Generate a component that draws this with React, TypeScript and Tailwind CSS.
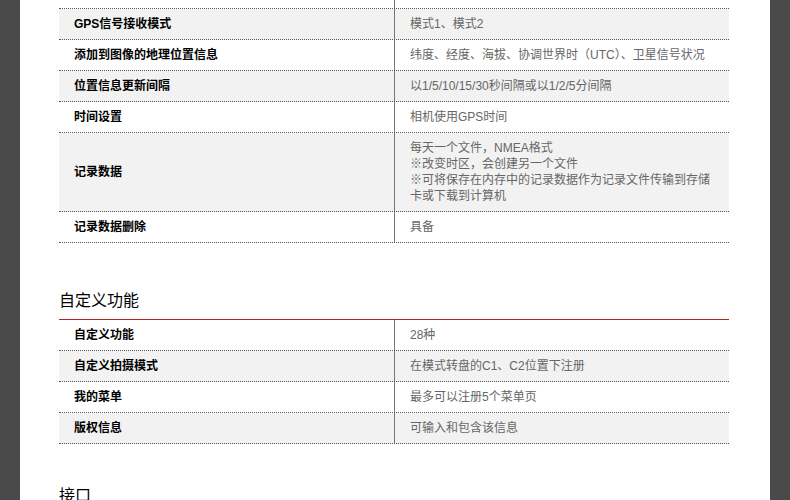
import React from "react";

type Row = { label: string; value: string[] };

const gpsRows: Row[] = [
  { label: "GPS功能", value: ["内置"] },
  { label: "GPS信号接收模式", value: ["模式1、模式2"] },
  { label: "添加到图像的地理位置信息", value: ["纬度、经度、海拔、协调世界时（UTC）、卫星信号状况"] },
  { label: "位置信息更新间隔", value: ["以1/5/10/15/30秒间隔或以1/2/5分间隔"] },
  { label: "时间设置", value: ["相机使用GPS时间"] },
  {
    label: "记录数据",
    value: [
      "每天一个文件，NMEA格式",
      "※改变时区，会创建另一个文件",
      "※可将保存在内存中的记录数据作为记录文件传输到存储",
      "卡或下载到计算机",
    ],
  },
  { label: "记录数据删除", value: ["具备"] },
];

const customRows: Row[] = [
  { label: "自定义功能", value: ["28种"] },
  { label: "自定义拍摄模式", value: ["在模式转盘的C1、C2位置下注册"] },
  { label: "我的菜单", value: ["最多可以注册5个菜单页"] },
  { label: "版权信息", value: ["可输入和包含该信息"] },
];

function SpecTable({ rows }: { rows: Row[] }) {
  return (
    <div className="w-[670px]">
      {rows.map((r, i) => (
        <div
          key={r.label}
          className={`flex border-b border-dotted border-[#555] ${i % 2 === 1 ? "bg-[#f2f2f2]" : "bg-white"}`}
        >
          <div className="flex w-[336px] items-center border-r border-solid border-r-[#777] pl-[15px] text-[12px] font-bold leading-4 text-black">
            {r.label}
          </div>
          <div className="flex-1 py-[7px] pl-[15px] pr-4 text-[12px] leading-4 text-[#666]">
            {r.value.map((v) => (
              <div key={v}>{v}</div>
            ))}
          </div>
        </div>
      ))}
    </div>
  );
}

export default function App() {
  return (
    <div className="h-[500px] overflow-hidden bg-[#4a4a4a] px-5 font-['Liberation_Sans','Noto_Sans_CJK_SC',sans-serif]">
      <div className="flow-root h-full bg-white pl-[39px]">
        <div className="-mt-[22px]">
          <SpecTable rows={gpsRows} />
        </div>
        <h2 className="mt-[46px] text-[16px] font-normal leading-6 text-black">自定义功能</h2>
        <div className="mt-[6px] h-px w-[670px] bg-[#b5261e]" />
        <SpecTable rows={customRows} />
        <h2 className="mt-[40px] text-[16px] font-normal leading-6 text-black">接口</h2>
      </div>
    </div>
  );
}
